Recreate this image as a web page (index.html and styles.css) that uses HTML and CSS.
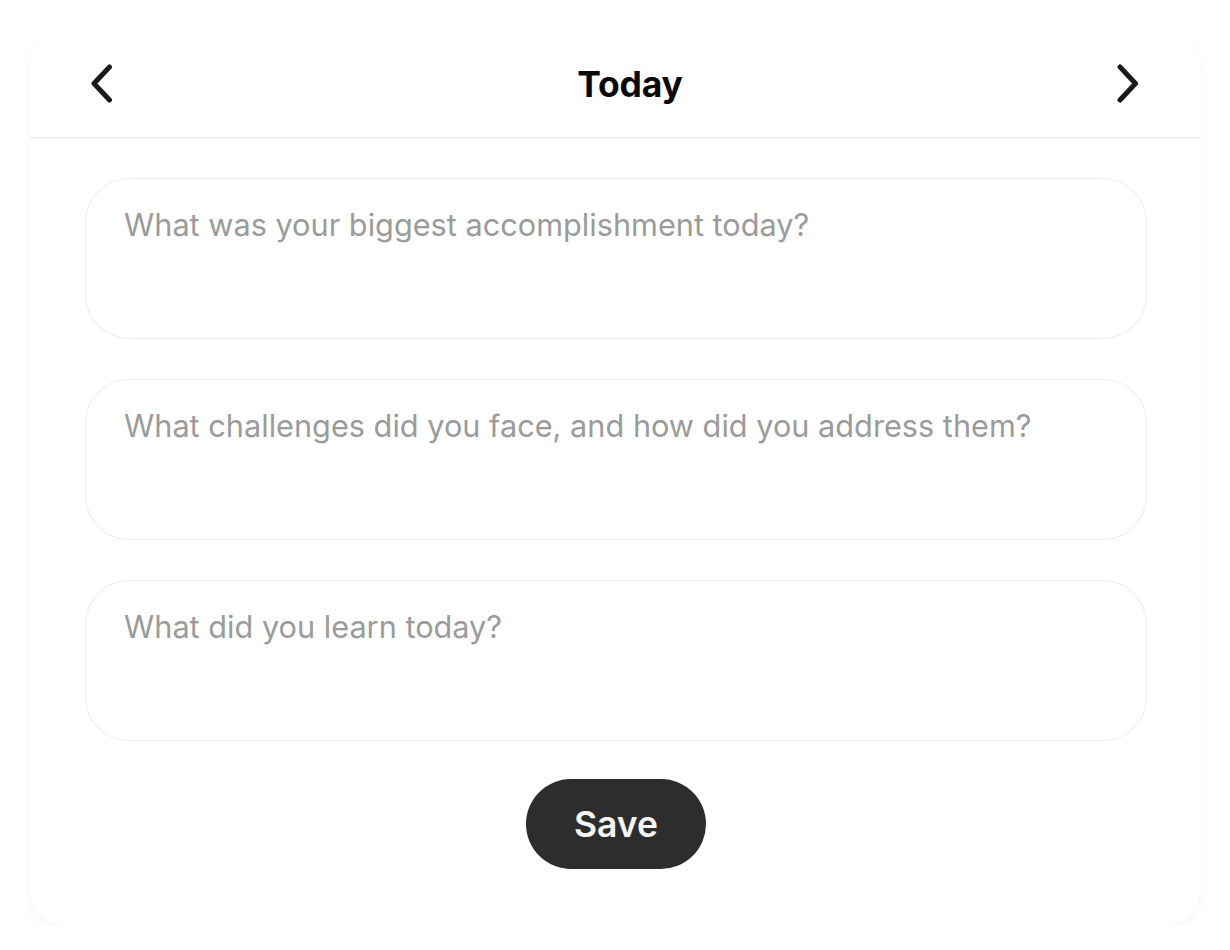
FILE: index.html
```html
<!DOCTYPE html>
<html lang="en">
<head>
<meta charset="utf-8">
<title>Today</title>
<link rel="stylesheet" href="styles.css">
</head>
<body>
<main class="card">
  <header class="card-header">
    <button class="nav-btn" aria-label="Previous day">
      <svg width="26" height="40" viewBox="0 0 26 40"><path d="M19.5 3 L4 19.5 L19.5 36" fill="none" stroke="#1a1a1a" stroke-width="5" stroke-linecap="round" stroke-linejoin="round"/></svg>
    </button>
    <h1 class="title">Today</h1>
    <button class="nav-btn" aria-label="Next day">
      <svg width="26" height="40" viewBox="0 0 26 40"><path d="M6 3 L21.5 19.5 L6 36" fill="none" stroke="#1a1a1a" stroke-width="5" stroke-linecap="round" stroke-linejoin="round"/></svg>
    </button>
  </header>
  <section class="body">
    <textarea class="entry" placeholder="What was your biggest accomplishment today?"></textarea>
    <textarea class="entry" placeholder="What challenges did you face, and how did you address them?"></textarea>
    <textarea class="entry" placeholder="What did you learn today?"></textarea>
    <button class="save">Save</button>
  </section>
</main>
</body>
</html>
```
FILE: styles.css
```css
html, body {
  margin: 0;
  padding: 0;
  background: #ffffff;
}
body {
  font-family: Inter, "Noto Sans", sans-serif;
  padding: 30px 30px 0 30px;
}
.card {
  width: 1170px;
  height: 895px;
  box-sizing: border-box;
  background: #ffffff;
  border-radius: 36px;
  box-shadow: 0 6px 16px rgba(0, 0, 0, 0.035);
  display: flex;
  flex-direction: column;
}
.card-header {
  height: 109px;
  box-sizing: border-box;
  border-bottom: 2px solid #f0f0f0;
  display: flex;
  align-items: center;
  justify-content: space-between;
  padding: 1px 58px 0 58px;
}
.nav-btn {
  background: none;
  border: none;
  padding: 0;
  width: 30px;
  height: 40px;
  display: flex;
  align-items: center;
  justify-content: center;
  cursor: pointer;
}
.title {
  margin: 0 0 0 30px;
  font-size: 35.5px;
  font-weight: 700;
  color: #0a0a0a;
  letter-spacing: -0.2px;
}
.body {
  display: flex;
  flex-direction: column;
  align-items: center;
  padding: 39px 53px 0 55px;
  gap: 40px;
}
.entry {
  display: block;
  width: 100%;
  height: 161px;
  box-sizing: border-box;
  border: 1.5px solid #ececec;
  border-radius: 44px;
  padding: 27px 38px;
  font-family: Inter, "Noto Sans", sans-serif;
  font-size: 30.7px;
  color: #333;
  background: #fff;
  resize: none;
  outline: none;
}
.entry::placeholder {
  color: #9b9b9b;
}
.save {
  width: 180px;
  height: 90px;
  border: none;
  border-radius: 45px;
  background: #2d2d2d;
  color: #f5f5f5;
  font-family: Inter, "Noto Sans", sans-serif;
  font-size: 35.5px;
  font-weight: 600;
  cursor: pointer;
  margin-top: -2px;
}
```
